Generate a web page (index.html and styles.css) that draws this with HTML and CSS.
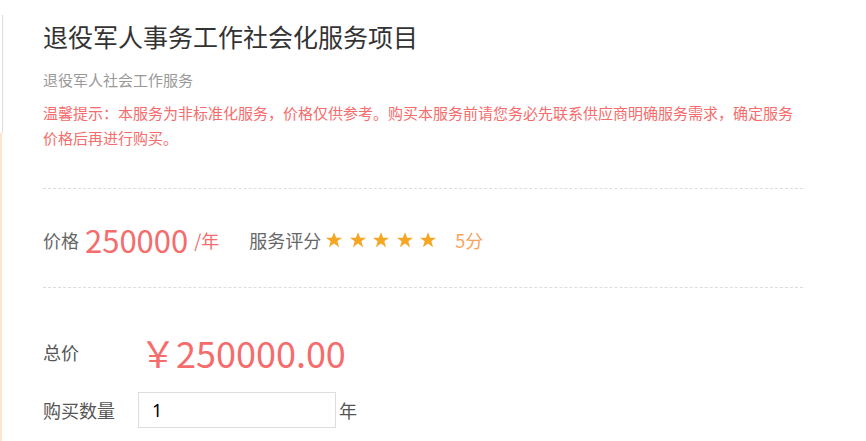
FILE: index.html
```html
<!DOCTYPE html>
<html lang="zh-CN">
<head>
  <meta charset="UTF-8">
  <title>退役军人事务工作社会化服务项目</title>
  <link rel="stylesheet" href="styles.css">
</head>
<body>

<div class="page">
  <!-- left thumbnail edge -->
  <div class="side">
    <div class="side-thumb"></div>
    <div class="side-bar"></div>
  </div>

  <div class="detail">
    <h1 class="title">退役军人事务工作社会化服务项目</h1>
    <p class="subtitle">退役军人社会工作服务</p>
    <p class="notice">温馨提示：本服务为非标准化服务，价格仅供参考。购买本服务前请您务必先联系供应商明确服务需求，确定服务价格后再进行购买。</p>

    <div class="price-row">
      <span class="label">价格</span>
      <span class="price">250000</span>
      <span class="unit">/年</span>
      <span class="label score-label">服务评分</span>
      <span class="stars">
        <svg viewBox="0 0 24 24"><polygon points="12,1.5 14.9,9 22.8,9 16.4,13.8 18.8,21.6 12,16.8 5.2,21.6 7.6,13.8 1.2,9 9.1,9"/></svg>
        <svg viewBox="0 0 24 24"><polygon points="12,1.5 14.9,9 22.8,9 16.4,13.8 18.8,21.6 12,16.8 5.2,21.6 7.6,13.8 1.2,9 9.1,9"/></svg>
        <svg viewBox="0 0 24 24"><polygon points="12,1.5 14.9,9 22.8,9 16.4,13.8 18.8,21.6 12,16.8 5.2,21.6 7.6,13.8 1.2,9 9.1,9"/></svg>
        <svg viewBox="0 0 24 24"><polygon points="12,1.5 14.9,9 22.8,9 16.4,13.8 18.8,21.6 12,16.8 5.2,21.6 7.6,13.8 1.2,9 9.1,9"/></svg>
        <svg viewBox="0 0 24 24"><polygon points="12,1.5 14.9,9 22.8,9 16.4,13.8 18.8,21.6 12,16.8 5.2,21.6 7.6,13.8 1.2,9 9.1,9"/></svg>
      </span>
      <span class="score">5分</span>
    </div>

    <div class="buy">
      <div class="buy-row total-row">
        <span class="buy-label">总价</span>
        <span class="total">￥250000.00</span>
      </div>
      <div class="buy-row">
        <span class="buy-label">购买数量</span>
        <input class="qty" type="text" value="1">
        <span class="qty-unit">年</span>
      </div>
    </div>
  </div>
</div>

</body>
</html>
```

FILE: styles.css
```css
body {
  margin: 0;
  font-family: "Noto Sans CJK SC", "Noto Sans", sans-serif;
  background: #fff;
  color: #333;
}

.page {
  display: flex;
  min-height: 441px;
}

.side {
  width: 3px;
  display: flex;
  flex-direction: column;
}

.side-thumb {
  margin-top: 15px;
  height: 118px;
  border-right: 1px solid #ddd;
}

.side-bar {
  flex: 1;
  width: 2px;
  background: #fbe6c6;
}

.detail {
  margin-left: 40px;
  width: 760px;
}

.title {
  margin: 19px 0 0;
  font-size: 25px;
  font-weight: normal;
  line-height: 34px;
  color: #333;
}

.subtitle {
  margin: 17px 0 0;
  font-size: 15px;
  line-height: 20px;
  color: #999;
}

.notice {
  margin: 10px 0 0;
  padding-bottom: 38px;
  font-size: 15px;
  line-height: 25px;
  color: #f56c6c;
  border-bottom: 1px dashed #ddd;
}

.price-row {
  display: flex;
  align-items: center;
  height: 40px;
  margin-top: 31px;
  padding-bottom: 27px;
  border-bottom: 1px dashed #ddd;
}

.label {
  font-size: 18px;
  color: #666;
}

.price {
  margin-left: 6px;
  font-size: 31px;
  line-height: 40px;
  color: #f56c6c;
}

.unit {
  margin-left: 6px;
  font-size: 18px;
  color: #f56c6c;
}

.score-label {
  margin-left: 30px;
}

.stars {
  display: flex;
  gap: 5.5px;
  margin-left: 4px;
}

.stars svg {
  width: 18px;
  height: 18px;
  fill: #f5a623;
}

.score {
  margin-left: 18px;
  font-size: 18px;
  color: #f7a35c;
}

.buy {
  margin-top: 39px;
}

.buy-row {
  display: flex;
  align-items: center;
  height: 36px;
  margin-top: 15px;
}

.total-row {
  height: 50px;
  margin-top: 0;
}

.buy-label {
  width: 95px;
  font-size: 18px;
  color: #555;
}

.total {
  margin-left: 2px;
  font-size: 36px;
  color: #f56c6c;
}

.qty {
  box-sizing: border-box;
  width: 198px;
  height: 36px;
  padding: 0 13px;
  border: 1px solid #ddd;
  font-family: "Noto Sans", sans-serif;
  font-size: 18px;
  color: #000;
  outline: none;
}

.qty-unit {
  margin-left: 3px;
  font-size: 18px;
  color: #555;
}
```
